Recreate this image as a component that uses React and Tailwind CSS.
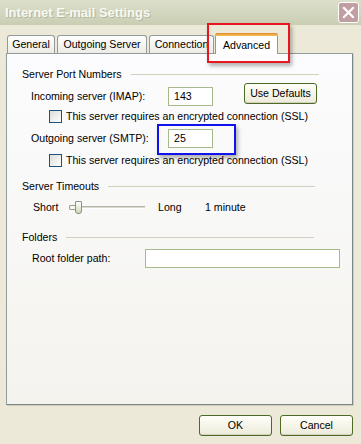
import React from 'react';

// XP-style "Internet E-mail Settings" dialog, Advanced tab

function Tab({ label, w, active }) {
  if (active) {
    return (
      <div
        className={`${w} -ml-px h-[21px] -mb-px relative z-10 border border-b-0 border-[#919b9c] rounded-t-[3px] bg-white flex flex-col`}
      >
        <div className="h-[3px] -mx-px -mt-px rounded-t-[3px] bg-gradient-to-b from-[#e08a2a] to-[#f7c35a]" />
        <div className="flex-1 flex items-center justify-center pt-[1px]">{label}</div>
      </div>
    );
  }
  return (
    <div
      className={`${w} h-[18px] border border-b-0 border-[#919b9c] rounded-t-[3px] bg-gradient-to-b from-white to-[#ecebe4] flex items-center justify-center`}
    >
      {label}
    </div>
  );
}

function SectionHeader({ title, lineEnd }) {
  return (
    <div className="h-[13px] flex items-center">
      <span className="whitespace-nowrap">{title}</span>
      <div className={`flex-1 ml-[9px] ${lineEnd} h-px bg-[#d0d0bf]`} />
    </div>
  );
}

function Checkbox({ label }) {
  return (
    <div className="h-[13px] flex items-center ml-[42px]">
      <div className="w-[13px] h-[13px] border border-[#1c5180] bg-gradient-to-br from-[#dcdcd7] to-white" />
      <span className="ml-[4px] whitespace-nowrap">{label}</span>
    </div>
  );
}

function XPButton({ children, className = '' }) {
  return (
    <div
      className={`h-[21px] border border-[#4b6b25] rounded-[3px] bg-gradient-to-b from-[#fffffa] to-[#ecead9] flex items-center justify-center shadow-[inset_0_-1px_0_#d6d0c0] ${className}`}
    >
      {children}
    </div>
  );
}

export default function App() {
  return (
    <div
      className="w-[361px] h-[444px] bg-[#ece9d8] relative overflow-hidden text-[10.6px] leading-[13px] text-black flex flex-col"
      style={{ fontFamily: '"Liberation Sans", Arial, sans-serif' }}
    >
      {/* Title bar */}
      <div className="h-[25px] bg-gradient-to-b from-[#dcdfcb] to-[#c9ceb3] flex items-center justify-between pl-[5px] pr-[2px]">
        <span className="text-[13px] font-bold text-[#f8f8f2] [text-shadow:1px_1px_0_#b4b89e]">
          Internet E-mail Settings
        </span>
        <div className="w-[21px] h-[21px] rounded-[3px] border border-white bg-[#c19ea2] flex items-center justify-center">
          <svg width="13" height="13" viewBox="0 0 13 13">
            <path d="M2 2 L11 11 M11 2 L2 11" stroke="white" strokeWidth="2.2" strokeLinecap="square" />
          </svg>
        </div>
      </div>

      {/* Tabs */}
      <div className="mt-[8px] h-[20px] flex items-end pl-[7px] gap-[2px]">
        <Tab label="General" w="w-[48px]" />
        <Tab label="Outgoing Server" w="w-[90px]" />
        <Tab label="Connection" w="w-[65px]" />
        <Tab label="Advanced" w="w-[63px]" active />
      </div>

      {/* Panel */}
      <div className="ml-[6px] w-[347px] h-[352px] border border-[#919b9c] border-r-[#7d8686] border-b-[#7d8686] bg-gradient-to-b from-[#fcfcfe] to-[#f4f3ee] shadow-[1px_1px_0_#d0cdbf] flex flex-col pl-[15px]">
        <div className="mt-[14px]">
          <SectionHeader title="Server Port Numbers" lineEnd="mr-[33px]" />
        </div>

        <div className="mt-[6px] h-[19px] flex items-center ml-[9px]">
          <span className="w-[137px] whitespace-nowrap">Incoming server (IMAP):</span>
          <div className="w-[45px] h-[19px] border border-[#a5b98a] bg-white flex items-center pl-[5px]">143</div>
          <XPButton className="ml-[31px] w-[73px] mb-[7px] h-[20px]">Use Defaults</XPButton>
        </div>

        <div className="mt-[4px] -ml-[15px]">
          <Checkbox label="This server requires an encrypted connection (SSL)" />
        </div>

        <div className="mt-[6px] h-[19px] flex items-center ml-[9px]">
          <span className="w-[137px] whitespace-nowrap">Outgoing server (SMTP):</span>
          <div className="w-[45px] h-[19px] border border-[#a5b98a] bg-white flex items-center pl-[5px]">25</div>
        </div>

        <div className="mt-[6px] -ml-[15px]">
          <Checkbox label="This server requires an encrypted connection (SSL)" />
        </div>

        <div className="mt-[13px]">
          <SectionHeader title="Server Timeouts" lineEnd="mr-[37px]" />
        </div>

        <div className="mt-[6px] h-[16px] flex items-center ml-[11px]">
          <span className="w-[36px]">Short</span>
          <div className="w-[76px] h-[16px] flex items-center">
            <div className="w-[6px] h-[5px] border border-r-0 border-[#9c9c95] rounded-l-[2px]" />
            <div className="w-[7px] h-[13px] border border-[#8f8f88] rounded-t-[1px] rounded-b-[3px] bg-gradient-to-b from-white to-[#c8dcb4]" />
            <div className="flex-1 h-[3px] border-t border-[#b5b4aa] border-b border-b-white bg-[#dcdad0]" />
          </div>
          <span className="ml-[13px] w-[47px]">Long</span>
          <span>1 minute</span>
        </div>

        <div className="mt-[16px]">
          <SectionHeader title="Folders" lineEnd="mr-[38px]" />
        </div>

        <div className="mt-[5px] h-[19px] flex items-center ml-[10px]">
          <span className="w-[113px] whitespace-nowrap">Root folder path:</span>
          <div className="w-[195px] h-[19px] border border-[#a5b98a] bg-white" />
        </div>
      </div>

      {/* Footer buttons */}
      <div className="mt-[10px] flex justify-end gap-[8px] pr-[8px]">
        <XPButton className="w-[73px]">OK</XPButton>
        <XPButton className="w-[73px]">Cancel</XPButton>
      </div>

      {/* Annotation highlights */}
      <div className="absolute left-[207px] top-[23px] w-[83px] h-[40px] border-2 border-[#e8161e] shadow-[2px_3px_4px_rgba(0,0,0,0.3)] z-20" />
      <div className="absolute left-[157px] top-[124px] w-[79px] h-[31px] border-2 border-[#1212ee] shadow-[2px_3px_4px_rgba(0,0,0,0.3)] z-20" />
    </div>
  );
}
